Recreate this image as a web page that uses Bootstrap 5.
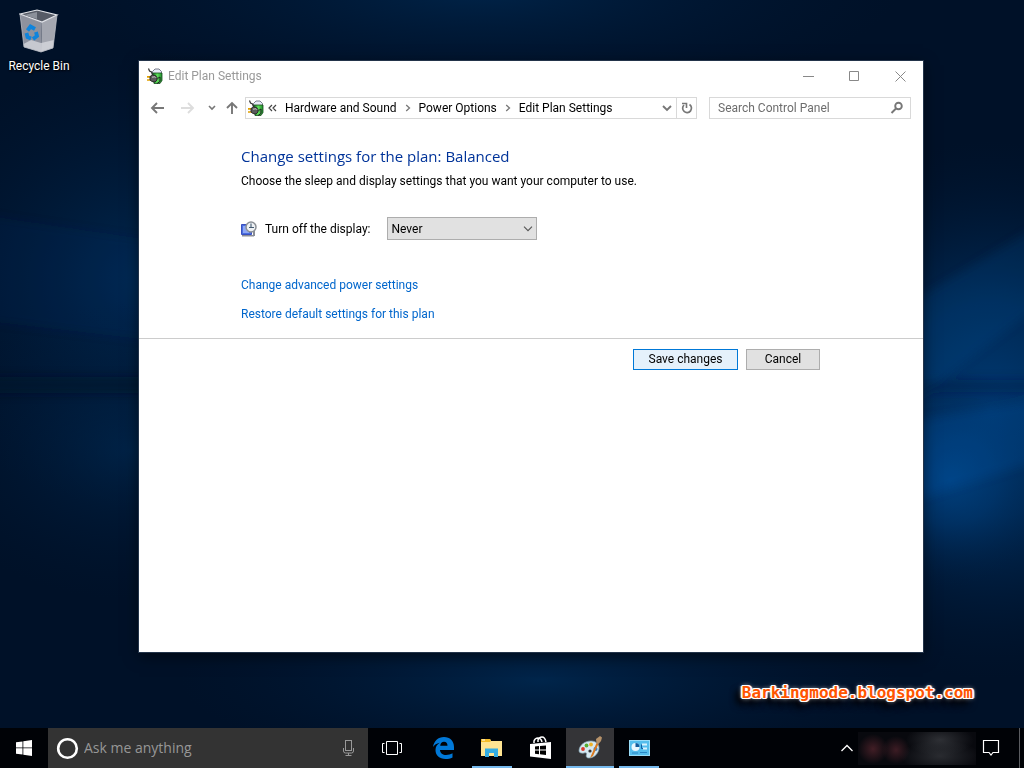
<!DOCTYPE html>
<html lang="en">
<head>
<meta charset="utf-8">
<meta name="viewport" content="width=device-width, initial-scale=1">
<title>Edit Plan Settings</title>
<link href="https://cdn.jsdelivr.net/npm/bootstrap@5.3.0/dist/css/bootstrap.min.css" rel="stylesheet">
<style>
  body { font-family: Roboto, "Open Sans", sans-serif; font-size: 12px; line-height: 16px; color: #000; background: #00122a; }
  svg { display: block; flex: none; }
  button { font: inherit; }
  .plain-btn { border: 0; background: none; padding: 0; display: flex; align-items: center; justify-content: center; flex: none; }

  .wallpaper { position: absolute; inset: 0; width: 100%; height: 100%; }
  .desk-icon { position: absolute; left: 0; top: 8px; width: 78px; color: #fff; text-shadow: 1px 1px 2px #000, 0 0 2px #000; }
  .desk-icon:hover { color: #fff; }

  .app-window { position: absolute; left: 139px; right: 101px; top: 61px; bottom: 116px; background: #fff; outline: 1px solid #23344a; box-shadow: 0 4px 14px rgba(0,0,0,.55); }
  .title-bar { height: 30px; padding-left: 8px; gap: 5px; color: #999; }
  .title-bar .plain-btn { width: 46px; height: 29px; }
  .nav-row { padding: 6px 12px 0 8px; height: 28px; }
  .nav-row .arrows { width: 98px; gap: 9px; padding-left: 3px; flex: none; }
  .box { border: 1px solid #d9d9d9; height: 22px; min-width: 0; }
  .address { padding-left: 2px; }
  .crumbs { gap: 8px; margin: 0; padding: 0; list-style: none; white-space: nowrap; }
  .crumbs li { display: flex; align-items: center; gap: 8px; }
  .crumbs a { color: #000; text-decoration: none; }
  .refresh { width: 20px; height: 20px; border-left: 1px solid #d9d9d9 !important; }
  .search-box { width: 202px; margin-left: 12px; flex: none; padding: 0 6px 0 8px; }
  .search-box input { border: 0; outline: 0; padding: 0; min-width: 0; color: #6d6d6d; }
  .search-box input::placeholder { color: #6d6d6d; opacity: 1; }

  .page-body { padding: 27px 102px 16px; }
  .page-body h1 { font-family: "Open Sans", sans-serif; font-size: 15px; line-height: 20px; color: #039; font-weight: 400; margin: 0; }
  .page-body p { margin: 7px 0 28px; }
  .setting { gap: 8px; margin-bottom: 37px; }
  .plan-select { width: 150px; height: 23px; margin-left: 8px; padding: 0 20px 0 4px; color: #000; border: 1px solid #adadad; border-radius: 0; appearance: none;
    background: #e1e1e1 url("data:image/svg+xml,%3Csvg xmlns='http://www.w3.org/2000/svg' width='10' height='6'%3E%3Cpath d='M1 .7 5 4.7 9 .7' fill='none' stroke='%23555' stroke-width='1.1'/%3E%3C/svg%3E") no-repeat right 3px center; }
  .task-links { gap: 13px; }
  .task-links a { color: #06c; text-decoration: none; }
  .action-row { border-top: 1px solid #ccc; padding: 10px 103px 0; gap: 8px; }
  .push { height: 21px; line-height: 19px; padding: 0; border: 1px solid #adadad; border-radius: 0; background: #e1e1e1; color: #000; font-size: 12px; width: 74px; }
  .push-default { width: 105px; border-color: #0078d7; background: #e5f1fb; }

  .watermark { position: absolute; right: 51px; bottom: 65px; font: bold 16px/20px "DejaVu Sans Mono", monospace; color: #f50;
    text-shadow: -1px -1px 0 #fff, 1px -1px 0 #fff, -1px 1px 0 #fff, 1px 1px 0 #fff, 0 -1px 0 #fff, 0 1px 0 #fff, -2px 0 1px #fff, 2px 0 1px #fff, 0 0 5px #fff, -6px 5px 6px #000, -4px 6px 8px #000; }

  .task-bar { position: absolute; left: 0; right: 0; bottom: 0; height: 40px; background: #000206; }
  .task-bar .plain-btn { width: 48px; height: 40px; position: relative; }
  .cortana { width: 320px; height: 40px; background: #333; padding: 0 10px 0 8px; gap: 5px; }
  .cortana input { border: 0; outline: 0; background: none; padding: 0; min-width: 0; height: 24px; font-family: "Open Sans", sans-serif; font-size: 14px; line-height: 24px; color: #979797; }
  .cortana input::placeholder { color: #979797; opacity: 1; }
  .apps { gap: 1px; margin-left: 3px; }
  .running::after { content: ""; position: absolute; left: 4px; right: 4px; bottom: 0; height: 2px; background: #76b9ed; }
  .current { background: #343437 !important; }
  .current::after { left: 0; right: 0; }
  .tray-blur { width: 118px; height: 33px; background:
    radial-gradient(circle at 15px 17px, rgba(72,32,40,.9), transparent 15px),
    radial-gradient(circle at 38px 18px, rgba(66,30,38,.9), transparent 14px),
    radial-gradient(ellipse 34px 16px at 82px 8px, rgba(50,52,57,.9), transparent),
    radial-gradient(ellipse 40px 16px at 82px 24px, rgba(45,47,52,.9), transparent), #08090e; }
  .task-bar .tray-up { width: 22px; }
  .task-bar .notify { width: 30px; }
  .show-desktop { width: 5px; height: 40px; border-left: 1px solid #5a5c60; margin-left: 13px; }
</style>
</head>
<body>
<svg width="0" height="0" class="position-absolute" aria-hidden="true">
  <defs>
    <linearGradient id="batt" x1="0" x2="1"><stop offset="0" stop-color="#0b6b1b"/><stop offset=".5" stop-color="#5fe05a"/><stop offset="1" stop-color="#1d8a2b"/></linearGradient>
    <symbol id="power" viewBox="0 0 16 16">
      <path d="M5.500 6V3.500L8 1h4l2.500 2.500V6z" fill="#e6eaf6" stroke="#6b7080" stroke-width=".9"/>
      <path d="M5.500 5h9.500v7.500l-2 3H7z" fill="url(#batt)" stroke="#1a4a20" stroke-width=".8"/>
      <path d="M1.500.5l1 2.500 2 1 1 3" fill="none" stroke="#333" stroke-width="1.200"/>
      <path d="M0 8.800h4M0 12h4" stroke="#e0a000" stroke-width="1.700"/>
      <path d="M3 8.500 5.500 7 8.500 7.500l1.500 2v2.500L8 14l-3-.5L3 12z" fill="#5a5a5a" stroke="#222" stroke-width=".9"/>
      <path d="M5 9.200l3-.4 1 1" stroke="#c5c5c5" fill="none"/>
      <path d="M10.500 10.500 13 9v4.500l-3 2" stroke="#222" fill="none"/>
    </symbol>
    <symbol id="chev" viewBox="0 0 6 8"><path d="M1.200 1 4.500 4 1.200 7" fill="none" stroke="#777" stroke-width="1.300"/></symbol>
  </defs>
</svg>

<main class="position-relative vh-100 overflow-hidden">
  <svg class="wallpaper" viewBox="0 0 1024 768" preserveAspectRatio="none" aria-hidden="true">
    <defs>
      <radialGradient id="glowR"><stop offset="0" stop-color="#004c94"/><stop offset=".4" stop-color="#003a74" stop-opacity=".85"/><stop offset="1" stop-color="#001a3a" stop-opacity="0"/></radialGradient>
      <radialGradient id="glowL"><stop offset="0" stop-color="#00305e"/><stop offset="1" stop-color="#001a3a" stop-opacity="0"/></radialGradient>
      <filter id="soft"><feGaussianBlur stdDeviation="5"/></filter>
    </defs>
    <rect width="1024" height="768" fill="#001128"/>
    <ellipse cx="480" cy="-10" rx="420" ry="110" fill="url(#glowL)" opacity=".6"/>
    <ellipse cx="150" cy="280" rx="260" ry="230" fill="url(#glowL)" opacity=".8"/>
    <ellipse cx="130" cy="450" rx="210" ry="150" fill="url(#glowL)" opacity=".5"/>
    <ellipse cx="540" cy="680" rx="360" ry="90" fill="url(#glowL)" opacity=".65"/>
    <ellipse cx="990" cy="410" rx="230" ry="270" fill="url(#glowR)" opacity=".7"/>
    <ellipse cx="950" cy="480" rx="120" ry="110" fill="url(#glowR)" opacity=".6"/>
    <g filter="url(#soft)">
      <path d="M-20 377H150v16H-20z" fill="#000e24" opacity=".55"/>
      <path d="M-20 215 150 240v100L-20 320z" fill="#00376a" opacity=".15"/>
      <path d="M915 300 1040 225v80L915 400z" fill="#0057a5" opacity=".15"/>
      <path d="M915 380h125v12H915z" fill="#001f45" opacity=".4"/>
      <path d="M915 500 1040 460v-60L915 420z" fill="#0061b5" opacity=".18"/>
    </g>
  </svg>

  <a href="#" class="desk-icon d-flex flex-column align-items-center text-decoration-none">
    <svg width="40" height="46" viewBox="0 0 40 46" aria-hidden="true">
      <path d="M1 6 23 14 22 44 5 39z" fill="#8e929e"/>
      <path d="M23 14 38 7 34 40 22 44z" fill="#a4a7b0"/>
      <path d="M4.500 36 12 32l10 3 13-3-1 8-12 4-17-5z" fill="#d9dbe0" opacity=".75"/>
      <path d="M1 6 18 2l20 5-15 7z" fill="#565b66" stroke="#e3e5ea" stroke-width="1.200"/>
      <path d="M5 7l13-3v7z" fill="#8b909a"/>
      <path d="M1 6 5 39l17 5 12-4L38 7" fill="none" stroke="#b9bcc4" stroke-width=".8"/>
      <g fill="none" stroke="#0f84dc" stroke-width="3.800"><path d="M8.500 22.500l3-4 4.500 2.500"/><path d="M17 24l1 4-4 3"/><path d="M12 30.500l-3.500-1.500-1-4"/></g>
    </svg>
    <span class="mt-1">Recycle Bin</span>
  </a>

  <section class="app-window d-flex flex-column" aria-label="Edit Plan Settings">
    <header class="title-bar d-flex align-items-center">
      <svg width="16" height="16"><use href="#power"/></svg>
      <span class="flex-grow-1">Edit Plan Settings</span>
      <div class="d-flex">
        <button class="plain-btn" aria-label="Minimize"><svg width="11" height="11"><path d="M0 5.500h11" stroke="#888"/></svg></button>
        <button class="plain-btn" aria-label="Maximize"><svg width="11" height="11"><path d="M.5.5h9v9h-9z" fill="none" stroke="#888"/></svg></button>
        <button class="plain-btn" aria-label="Close"><svg width="11" height="11"><path d="M.5.500l10 10M10.500.5l-10 10" stroke="#888"/></svg></button>
      </div>
    </header>

    <nav class="nav-row d-flex" aria-label="Location">
      <div class="arrows d-flex align-items-center">
        <button class="plain-btn" aria-label="Back"><svg width="16" height="14"><path d="M2 7h12M7 2 2 7l5 5" fill="none" stroke="#777" stroke-width="1.900"/></svg></button>
        <button class="plain-btn ms-1" aria-label="Forward"><svg width="16" height="14"><path d="M2 7h12M9 2l5 5-5 5" fill="none" stroke="#ddd" stroke-width="1.900"/></svg></button>
        <button class="plain-btn ms-1" aria-label="Recent locations"><svg width="8" height="6"><path d="M1 1l3 3 3-3" fill="none" stroke="#777" stroke-width="1.600"/></svg></button>
        <button class="plain-btn" aria-label="Up"><svg width="14" height="14"><path d="M7 13V2M2 7l5-5 5 5" fill="none" stroke="#777" stroke-width="1.900"/></svg></button>
      </div>
      <div class="box address d-flex align-items-center flex-grow-1">
        <svg width="16" height="16" class="me-1"><use href="#power"/></svg>
        <ol class="crumbs d-flex flex-grow-1">
          <li><svg width="9" height="8"><path d="M4 1 1 4l3 3M8 1 5 4l3 3" fill="none" stroke="#444" stroke-width="1.200"/></svg></li>
          <li><a href="#">Hardware and Sound</a><svg width="6" height="8"><use href="#chev"/></svg></li>
          <li><a href="#">Power Options</a><svg width="6" height="8"><use href="#chev"/></svg></li>
          <li><a href="#">Edit Plan Settings</a></li>
        </ol>
        <button class="plain-btn me-1" aria-label="Previous locations"><svg width="10" height="8"><path d="M1 2l4 4 4-4" fill="none" stroke="#777" stroke-width="1.900"/></svg></button>
        <button class="plain-btn refresh" aria-label="Refresh"><svg width="12" height="12"><path d="M8.500 2.500A4.400 4.400 0 1 1 3 3" fill="none" stroke="#777" stroke-width="1.700"/><path d="M1 1.500h4.500V6" fill="none" stroke="#777" stroke-width="1.600"/></svg></button>
      </div>
      <div class="box search-box d-flex align-items-center">
        <input class="flex-grow-1" type="search" placeholder="Search Control Panel" aria-label="Search Control Panel">
        <svg width="14" height="14"><circle cx="8.500" cy="5" r="3.300" fill="none" stroke="#777" stroke-width="1.900"/><path d="M6 7.500 1.500 12" stroke="#777" stroke-width="2"/></svg>
      </div>
    </nav>

    <div class="page-body">
      <h1>Change settings for the plan: Balanced</h1>
      <p>Choose the sleep and display settings that you want your computer to use.</p>
      <div class="setting d-flex align-items-center">
        <svg width="16" height="16"><path d="M.5 3.500h10v10H.5z" fill="#4a6fe0" stroke="#3a4fc0"/><path d="M2 5h6v7H2z" fill="#8fa8f5"/><path d="M1 14h12v1.500H1z" fill="#8a8d96"/><path d="M13 10v5" stroke="#8a8d96" stroke-width="2"/><circle cx="10" cy="6" r="5" fill="#eef1f4" stroke="#8b9096" stroke-width="1.500"/><path d="M10 2.500V6.500h3M10 6.500H8" fill="none" stroke="#445a70" stroke-width="1.100"/></svg>
        <label for="displayOff">Turn off the display:</label>
        <select id="displayOff" class="plan-select"><option>Never</option></select>
      </div>
      <div class="task-links d-flex flex-column align-items-start">
        <a href="#">Change advanced power settings</a>
        <a href="#">Restore default settings for this plan</a>
      </div>
    </div>

    <div class="action-row d-flex justify-content-end">
      <button class="btn push push-default">Save changes</button>
      <button class="btn push">Cancel</button>
    </div>
  </section>

  <div class="watermark">Barkingmode.blogspot.com</div>

  <footer class="task-bar d-flex align-items-center">
    <button class="plain-btn" aria-label="Start"><svg width="16" height="16" fill="#fff"><path d="M0 2.300 6.500 1.400v6.100H0zM7.300 1.300 16 0v7.500H7.300zM0 8.300h6.500v6.300L0 13.700zM7.300 8.300H16V16l-8.700-1.300z"/></svg></button>
    <div class="cortana d-flex align-items-center">
      <svg width="23" height="23"><circle cx="11.500" cy="11.500" r="9.300" fill="none" stroke="#fff" stroke-width="2.600"/></svg>
      <input class="flex-grow-1" type="text" placeholder="Ask me anything" aria-label="Ask me anything">
      <button class="plain-btn w-auto" aria-label="Speak"><svg width="20" height="18" fill="none" stroke="#999"><rect x="7.500" y="1.500" width="6" height="10"/><path d="M5.500 9v3q0 2 2 2h6q2 0 2-2V9M10.500 14v2.500M7.500 16.500h6"/></svg></button>
    </div>
    <button class="plain-btn" aria-label="Task view"><svg width="20" height="16" fill="none" stroke="#fff"><path d="M4.500 1.500h11v13h-11zM2.500 3.500h-2v9h2M17.500 3.500h2v9h-2"/></svg></button>
    <div class="apps d-flex">
      <button class="plain-btn" aria-label="Edge"><svg width="21" height="22" viewBox="0 0 21 22"><path d="M0 10C1 4 5 0 11 0c6 0 10 4 10 10v3H7c0 3 3 5 6 5 2.500 0 4.500-.6 6.500-1.700v4.200C17.500 21.600 15 22 12.500 22 6.500 22 2.500 18.500 2.500 13c0-3 1.500-5.700 4.200-7.300C3.500 6.300 1.500 8 0 10zm7.200-1.200h7.300c0-2.700-1.300-4-3.500-4-2.100 0-3.500 1.500-3.800 4z" fill="#0078d7"/></svg></button>
      <button class="plain-btn running" aria-label="File Explorer"><svg width="22" height="20"><path d="M0 1h9l1 2h11v15H0z" fill="#ffe592"/><path d="M0 1h9l1 2-1 1H0z" fill="#f5bd28"/><path d="M1 1.500h3v1H1z" fill="#fff"/><path d="M4 10.500h13V19h-4v-4H8v4H4z" fill="#35aee2"/></svg></button>
      <button class="plain-btn" aria-label="Store"><svg width="22" height="24"><path d="M0 8l21-2v17L0 20.500z" fill="#fff"/><path d="M4 7V5q1-3 4-3t4 4M8 6V4q1-3 4-3t4 5" fill="none" stroke="#fff" stroke-width="1.500"/><path d="M5 10.500l4-.4v3.500H5zM10 10l6-.6v4.200h-6zM5 14.500h4v3.700l-4-.5zM10 14.500h6V19l-6-.7z" fill="#000"/></svg></button>
      <button class="plain-btn running current" aria-label="Paint"><svg width="24" height="24"><path d="M1 15C1 9 7 5 13 5c5 0 8 3 8 7s-4 10-10 10c-3 0-3-2-2.500-3.500S8 16.500 6 17s-5 0-5-2z" fill="#d6e8f1" stroke="#84a5b5" stroke-width=".7"/><circle cx="5" cy="13" r="1.900" fill="#d93a2b"/><circle cx="8.500" cy="9.500" r="1.900" fill="#56ae35"/><circle cx="13" cy="8.500" r="1.900" fill="#eeb22a"/><circle cx="17.500" cy="13" r="2" fill="#2b7fd4"/><circle cx="12" cy="15" r="1.600" fill="#343437"/><path d="M12 22 18.500 7l2 1L15 20z" fill="#d87921"/><path d="M18.500 7 18 3l4-3 2 1.500L23 5l-2.500 3z" fill="#b6926a"/></svg></button>
      <button class="plain-btn running" aria-label="Control Panel"><svg width="21" height="16"><rect x=".5" y=".5" width="20" height="15" fill="#54bdec" stroke="#9adcf7"/><circle cx="6.500" cy="7" r="4" fill="#e9f7fe"/><path d="M6.500 7V3a4 4 0 0 1 4 4z" fill="#145b9c"/><path d="M13 3.500h5v2h-5zM14 7.500h4v2h-4z" fill="#d9f2fd"/><path d="M12.500 4.500v4h1.500" fill="none" stroke="#135ea4"/><path d="M3 13h6M11 12.500h7" stroke="#2a86c4" stroke-width="1.200"/></svg></button>
    </div>
    <div class="d-flex align-items-center ms-auto">
      <button class="plain-btn tray-up" aria-label="Show hidden icons"><svg width="12" height="8"><path d="M.5 7 6 1.500 11.500 7" fill="none" stroke="#fff" stroke-width="1.300"/></svg></button>
      <div class="tray-blur"></div>
      <button class="plain-btn notify" aria-label="Notifications"><svg width="18" height="18"><path d="M1.500 1.500h15v12H11l-2 2.500-2-2.500H1.500z" fill="none" stroke="#fff" stroke-width="1.200"/></svg></button>
      <div class="show-desktop"></div>
    </div>
  </footer>
</main>
<script src="https://cdn.jsdelivr.net/npm/bootstrap@5.3.0/dist/js/bootstrap.bundle.min.js"></script>
</body>
</html>
